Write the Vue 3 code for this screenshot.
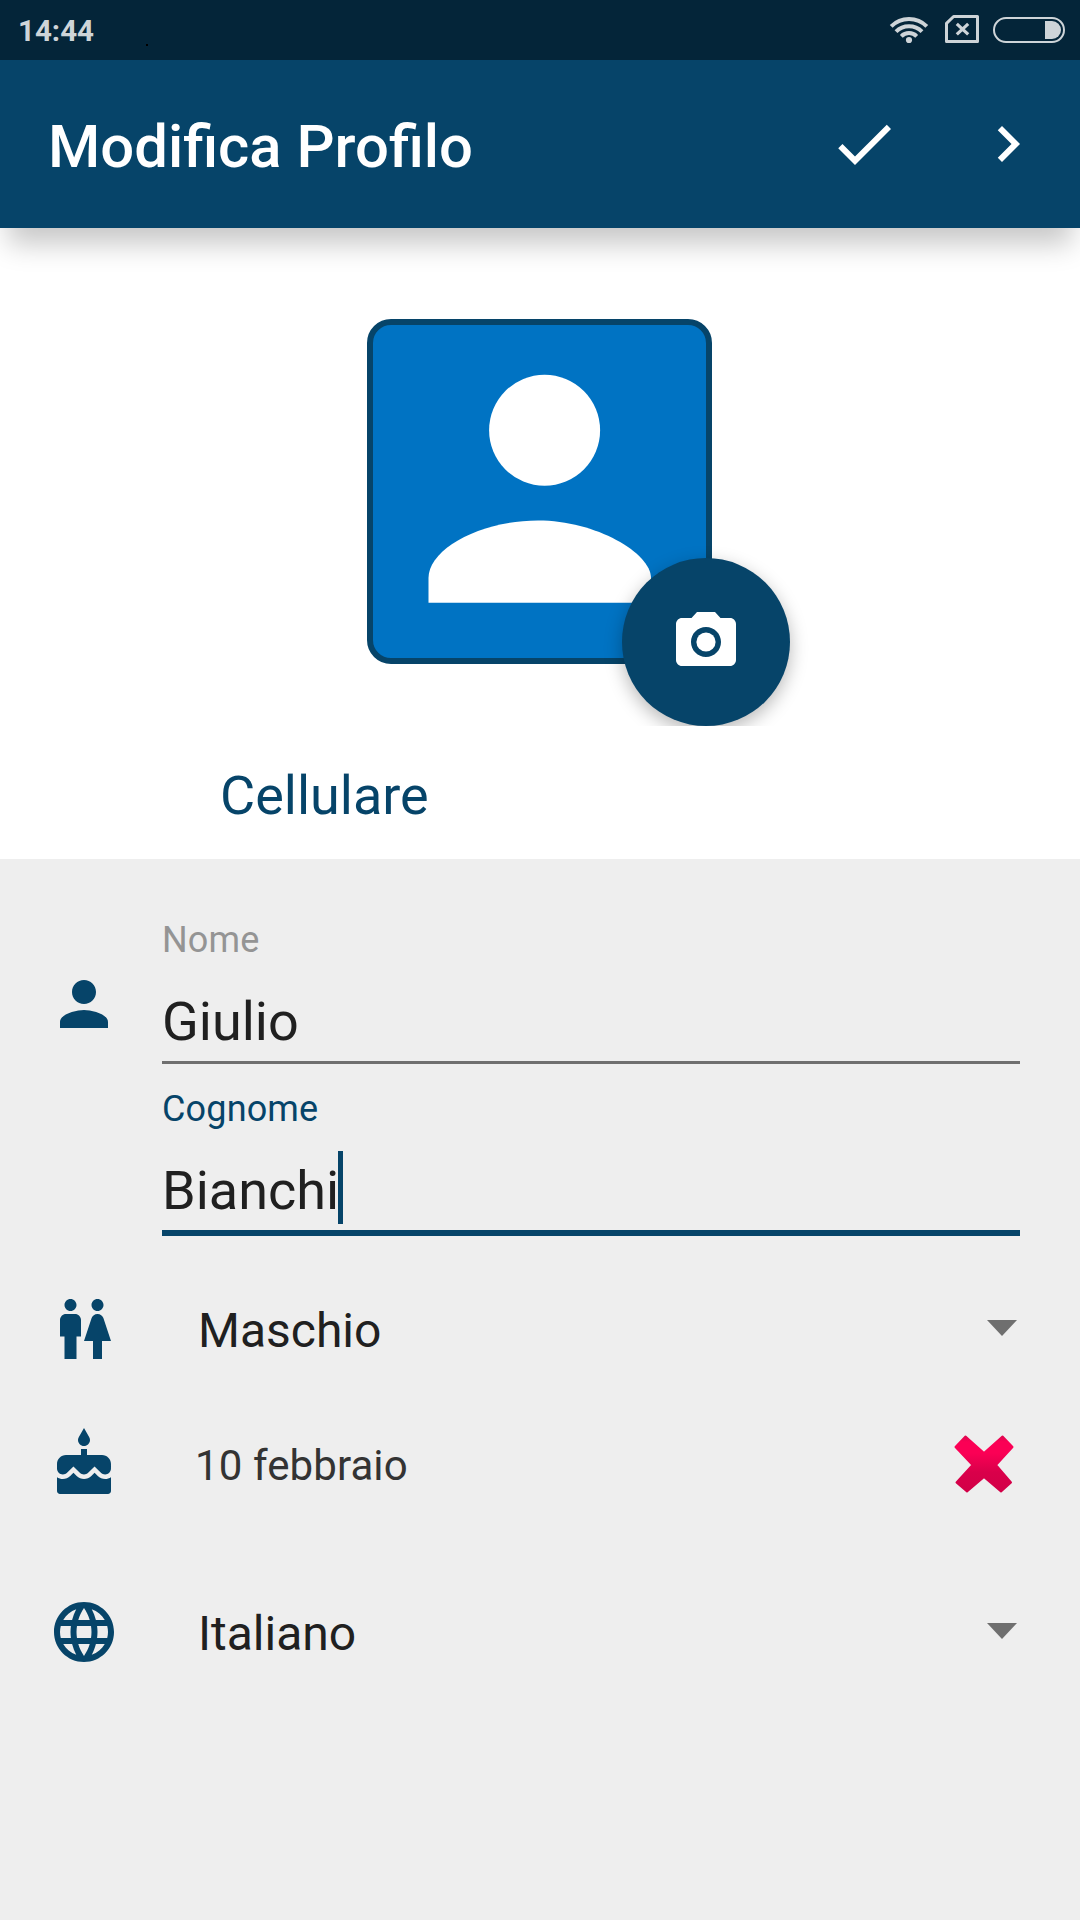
<template>
    <div class="profile">
        <div class="status-bar">
            <span class="status-bar__time">14:44</span>
            <span class="status-bar__speck"></span>
            <svg class="status-bar__icons" width="200" height="60" viewBox="0 0 200 60">
                <g fill="none" stroke="#ced4d8" stroke-width="4">
                    <path d="M11.2 26.3a25.2 25.2 0 0 1 35.6 0" />
                    <path d="M16 31.6a18.4 18.4 0 0 1 26 0" />
                    <path d="M21.3 36.3a10.9 10.9 0 0 1 15.4 0" />
                </g>
                <circle cx="29" cy="40" r="3.1" fill="#ced4d8" />
                <path d="M73.6 16.5H97.5V41.5H66.5V23.4Z" fill="none" stroke="#ced4d8" stroke-width="3" stroke-linejoin="round" />
                <path d="M76.8 23.8l11.4 10.6m0-10.6L76.8 34.4" stroke="#ced4d8" stroke-width="3.2" />
                <rect x="114" y="18" width="70" height="24" rx="12" fill="none" stroke="#ced4d8" stroke-width="2" />
                <path d="M165 21h7a9 9 0 0 1 0 18h-7z" fill="#ced4d8" />
            </svg>
        </div>

        <header class="toolbar">
            <h1 class="toolbar__title">Modifica Profilo</h1>
            <svg class="icon" viewBox="0 0 24 24">
                <path d="M9 16.17L4.83 12l-1.42 1.41L9 19 21 7l-1.41-1.41z" />
            </svg>
            <svg class="icon" viewBox="0 0 24 24">
                <path d="M10 6L8.59 7.41 13.17 12l-4.58 4.59L10 18l6-6z" />
            </svg>
        </header>

        <section class="photo">
            <div class="photo__frame">
                <div class="photo__avatar">
                    <svg width="333" height="333" viewBox="373 325 333 333" fill="#fff">
                        <circle cx="544.6" cy="430.2" r="55.5" />
                        <path d="M428.5 602.7V578C428.5 549 480 520.5 538 520.5S651 553 651 578V602.7Z" />
                    </svg>
                </div>
                <button class="photo__fab">
                    <svg class="icon" viewBox="0 0 24 24">
                        <circle cx="12" cy="12" r="3.2" />
                        <path d="M9 2L7.17 4H4c-1.1 0-2 .9-2 2v12c0 1.1.9 2 2 2h16c1.1 0 2-.9 2-2V6c0-1.1-.9-2-2-2h-3.17L15 2H9zm3 15c-2.76 0-5-2.24-5-5s2.24-5 5-5 5 2.24 5 5-2.24 5-5 5z" />
                    </svg>
                </button>
            </div>
            <div class="photo__label">Cellulare</div>
        </section>

        <section class="form">
            <div class="form__names">
                <svg class="icon form__person" viewBox="0 0 24 24">
                    <path :d="icons.person" />
                </svg>
                <div class="form__fields">
                    <div
                        v-for="field in fields"
                        :key="field.label"
                        class="field"
                        :class="{ 'field--focused': field.focused }"
                    >
                        <div class="field__label">{{ field.label }}</div>
                        <div class="field__value">
                            <span class="field__text">{{ field.value }}<i v-if="field.focused" class="field__caret"></i></span>
                        </div>
                    </div>
                </div>
            </div>

            <div v-for="row in rows" :key="row.icon" class="row" :class="`row--${row.icon}`">
                <svg class="icon" viewBox="0 0 24 24">
                    <path :d="icons[row.icon]" />
                </svg>
                <span class="row__text">{{ row.text }}</span>
                <svg v-if="row.clearable" class="row__clear" width="60" height="58" viewBox="0 0 60 58">
                    <defs>
                        <linearGradient id="clear" x1="0" y1="0" x2="0" y2="1">
                            <stop offset="0" stop-color="#e0064f" />
                            <stop offset="0.1" stop-color="#fb0055" />
                            <stop offset="0.3" stop-color="#fb0055" />
                            <stop offset="0.65" stop-color="#d9004a" />
                            <stop offset="1" stop-color="#d20047" />
                        </linearGradient>
                    </defs>
                    <path
                        d="M11.5 1.5L30 18 48.5 1.5 58.5 12 42 30 57 47.5 47 56.5 30 42 13 56.5 2.5 47.5 18.5 30 1.5 12Z"
                        fill="url(#clear)"
                        stroke="url(#clear)"
                        stroke-width="2"
                        stroke-linejoin="round"
                    />
                </svg>
                <svg v-else class="row__arrow" width="30" height="16" viewBox="0 0 30 16">
                    <path d="M0 0h30L15 16z" />
                </svg>
            </div>
        </section>
    </div>
</template>

<script setup>
import { ref } from 'vue';

const icons = {
    person: 'M12 12c2.21 0 4-1.79 4-4s-1.79-4-4-4-4 1.79-4 4 1.79 4 4 4zm0 2c-2.67 0-8 1.34-8 4v2h16v-2c0-2.66-5.33-4-8-4z',
    gender: 'M5.5 22v-7.5H4V9c0-1.1.9-2 2-2h3c1.1 0 2 .9 2 2v5.5H9.5V22h-4zM18 22v-6h3l-2.54-7.63C18.18 7.55 17.42 7 16.56 7h-.12c-.86 0-1.63.55-1.9 1.37L12 16h3v6h3zM7.5 6c1.11 0 2-.89 2-2s-.89-2-2-2-2 .89-2 2 .89 2 2 2zm9 0c1.11 0 2-.89 2-2s-.89-2-2-2-2 .89-2 2 .89 2 2 2z',
    birthday: 'M12 6c1.11 0 2-.9 2-2 0-.38-.1-.73-.29-1.03L12 0l-1.71 2.97c-.19.3-.29.65-.29 1.03 0 1.1.9 2 2 2zm4.6 9.99l-1.07-1.07-1.08 1.07c-1.3 1.3-3.58 1.31-4.89 0l-1.07-1.07-1.09 1.07C6.75 16.64 5.88 17 4.96 17c-.73 0-1.4-.23-1.96-.61V21c0 .55.45 1 1 1h16c.55 0 1-.45 1-1v-4.61c-.56.38-1.23.61-1.96.61-.92 0-1.79-.36-2.44-1.01zM18 9h-5V7h-2v2H6c-1.66 0-3 1.34-3 3v1.54c0 1.08.88 1.96 1.96 1.96.52 0 1.02-.2 1.38-.57l2.14-2.13 2.13 2.13c.74.74 2.03.74 2.77 0l2.14-2.13 2.13 2.13c.37.37.86.57 1.38.57 1.08 0 1.96-.88 1.96-1.96V12C21 10.34 19.66 9 18 9z',
    language: 'M11.99 2C6.47 2 2 6.48 2 12s4.47 10 9.99 10C17.52 22 22 17.52 22 12S17.52 2 11.99 2zm6.93 6h-2.95c-.32-1.25-.78-2.45-1.38-3.56 1.84.63 3.37 1.91 4.33 3.56zM12 4.04c.83 1.2 1.48 2.53 1.91 3.96h-3.82c.43-1.43 1.08-2.76 1.91-3.96zM4.26 14C4.1 13.36 4 12.69 4 12s.1-1.36.26-2h3.38c-.08.66-.14 1.32-.14 2 0 .68.06 1.34.14 2H4.26zm.82 2h2.95c.32 1.25.78 2.45 1.38 3.56-1.84-.63-3.37-1.9-4.33-3.56zm2.95-8H5.08c.96-1.66 2.49-2.93 4.33-3.56C8.81 5.55 8.35 6.75 8.03 8zM12 19.96c-.83-1.2-1.48-2.53-1.91-3.96h3.82c-.43 1.43-1.08 2.76-1.91 3.96zM14.34 14H9.66c-.09-.66-.16-1.32-.16-2 0-.68.07-1.35.16-2h4.68c.09.65.16 1.32.16 2 0 .68-.07 1.34-.16 2zm.25 5.56c.6-1.11 1.06-2.31 1.38-3.56h2.95c-.96 1.65-2.49 2.93-4.33 3.56zM16.36 14c.08-.66.14-1.32.14-2 0-.68-.06-1.34-.14-2h3.38c.16.64.26 1.31.26 2s-.1 1.36-.26 2h-3.38z'
};

const fields = ref([
    { label: 'Nome', value: 'Giulio', focused: false },
    { label: 'Cognome', value: 'Bianchi', focused: true }
]);

const rows = ref([
    { icon: 'gender', text: 'Maschio' },
    { icon: 'birthday', text: '10 febbraio', clearable: true },
    { icon: 'language', text: 'Italiano' }
]);
</script>

<style>
body {
    margin: 0;
    background: #eee;
}
</style>

<style scoped>
.profile {
    display: flex;
    flex-direction: column;
    width: 1080px;
    height: 1920px;
    overflow: hidden;
    background: #eee;
    font-family: Roboto, sans-serif;
    color: #202020;
}

.icon {
    flex: none;
    display: block;
    width: 72px;
    height: 72px;
    fill: currentColor;
}

.status-bar {
    display: flex;
    align-items: center;
    height: 60px;
    padding-left: 18px;
    box-sizing: border-box;
    background: #042539;
    color: #ced4d8;
}

.status-bar__time {
    width: 128px;
    padding-top: 1px;
    font-size: 29.5px;
    font-weight: 700;
    line-height: 60px;
}

.status-bar__speck {
    width: 2px;
    height: 2px;
    margin-top: 30px;
    background: #000;
}

.status-bar__icons {
    margin-left: auto;
}

.toolbar {
    position: relative;
    z-index: 1;
    display: flex;
    align-items: center;
    gap: 72px;
    height: 168px;
    padding: 0 36px 0 48px;
    box-sizing: border-box;
    background: #064469;
    color: #fff;
    box-shadow: 0 24px 26px -8px rgba(0, 0, 0, 0.22);
}

.toolbar__title {
    flex: 1;
    margin: 0;
    padding-top: 5px;
    font-size: 59.8px;
    font-weight: 500;
    line-height: 72px;
    white-space: nowrap;
}

.photo {
    height: 631px;
    background: #fff;
}

.photo__frame {
    position: relative;
    height: 498px;
    padding: 91px 0 0 367px;
    box-sizing: border-box;
    overflow: hidden;
}

.photo__avatar {
    width: 333px;
    height: 333px;
    border: 6px solid #064469;
    border-radius: 24px;
    background: #0073c3;
    overflow: hidden;
}

.photo__avatar svg {
    display: block;
}

.photo__fab {
    position: absolute;
    left: 622px;
    bottom: 0;
    display: flex;
    align-items: center;
    justify-content: center;
    width: 168px;
    height: 168px;
    padding: 0;
    border: 0;
    border-radius: 50%;
    background: #064469;
    color: #fff;
    box-shadow: 0 6px 18px rgba(0, 0, 0, 0.28);
}

.photo__label {
    padding: 38px 0 0 220px;
    font-size: 54px;
    line-height: 64px;
    color: #064469;
}

.form {
    padding: 60px 60px 0 48px;
}

.form__names {
    display: flex;
    gap: 42px;
}

.form__person {
    margin-top: 49px;
    color: #064469;
}

.form__fields {
    display: flex;
    flex: 1;
    flex-direction: column;
    gap: 24px;
}

.field {
    border-bottom: 3px solid #6f6f6f;
}

.field--focused {
    border-bottom: 6px solid #064469;
}

.field__label {
    margin-bottom: 29px;
    font-size: 36px;
    line-height: 42px;
    letter-spacing: 0.15px;
    color: #949494;
}

.field--focused .field__label {
    color: #064469;
}

.field__value {
    margin-bottom: 7px;
    font-size: 54px;
    line-height: 64px;
}

.field__text {
    position: relative;
    display: inline-block;
    vertical-align: top;
}

.field__caret {
    position: absolute;
    right: -4px;
    top: -8px;
    width: 5px;
    height: 73px;
    background: #064469;
}

.row {
    display: flex;
    align-items: center;
    height: 72px;
    color: #064469;
}

.row--gender {
    margin-top: 57px;
}

.row--birthday {
    margin-top: 63px;
}

.row--language {
    margin-top: 96px;
}

.row__text {
    flex: 1;
    margin-left: 78px;
    padding-top: 3px;
    font-size: 48px;
    line-height: 72px;
    color: #202020;
}

.row--birthday .row__text {
    margin-left: 75px;
    font-size: 42px;
    letter-spacing: 0.1px;
    color: #333;
}

.row__arrow {
    margin: 0 3px 2px 0;
    fill: #6f6f6f;
}

.row__clear {
    margin-right: 6px;
}
</style>
